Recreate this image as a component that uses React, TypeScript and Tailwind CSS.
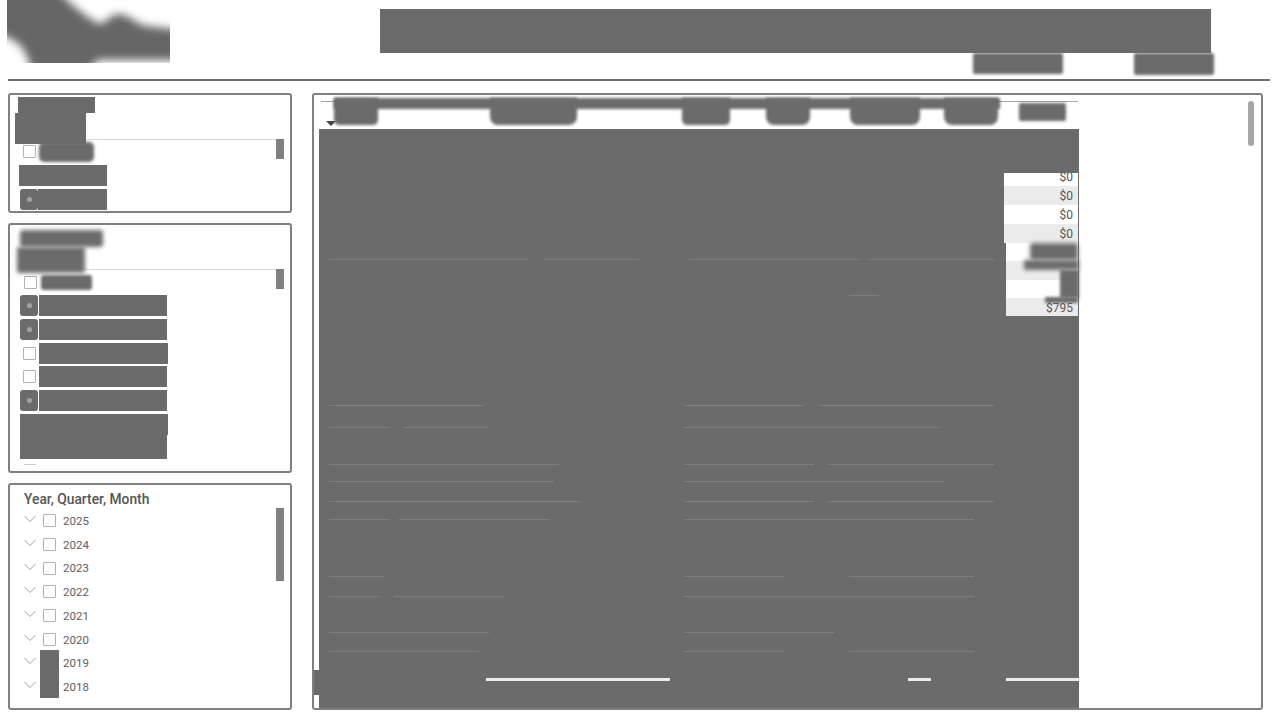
const font = { fontFamily: 'Roboto, "Noto Sans", sans-serif' };

const years = ['2025', '2024', '2023', '2022', '2021', '2020', '2019', '2018'];

// values column at the right of the table
const valueRows = [
  { text: '$0', cls: 'h-[13px] bg-white items-end overflow-hidden', inner: 'h-[19px] shrink-0' },
  { text: '$0', cls: 'h-[19px] bg-[#ebebeb] items-center', inner: '' },
  { text: '$0', cls: 'h-[19px] bg-white items-center', inner: '' },
  { text: '$0', cls: 'h-[19px] bg-[#ebebeb] items-center', inner: '' },
  { text: '', cls: 'h-[18px] bg-white items-center', inner: '' },
  { text: '', cls: 'h-[19px] bg-[#ebebeb] items-center', inner: '' },
  { text: '', cls: 'h-[18px] bg-white items-center', inner: '' },
  { text: '$795', cls: 'h-[18px] bg-[#ebebeb] items-center pt-[2px]', inner: '' },
];

// faint light streaks that run through the table body: [y, x, width]
const streaks = [
  [259, 10, 200], [259, 225, 95], [259, 370, 170], [259, 550, 125], [295, 530, 30],
  [405, 10, 155], [405, 365, 120], [405, 500, 175], [427, 10, 60], [427, 85, 85], [427, 365, 255],
  [464, 10, 230], [464, 365, 130], [464, 510, 165], [481, 10, 225], [481, 365, 260],
  [501, 10, 250], [501, 365, 130], [501, 510, 165], [519, 10, 60], [519, 80, 150], [519, 365, 290],
  [576, 10, 55], [576, 365, 100], [576, 530, 125], [596, 10, 50], [596, 75, 110], [596, 365, 290],
  [632, 10, 160], [632, 365, 150], [651, 10, 150], [651, 365, 100], [651, 530, 125],
];

function Box({ className }: { className: string }) {
  return <div className={`bg-[#6b6b6b] ${className}`} />;
}

function Check({ on }: { on?: boolean }) {
  if (on) {
    return (
      <div className="w-[18px] h-[21px] shrink-0 bg-[#6b6b6b] rounded-[3px] flex items-center justify-center blur-[0.6px]">
        <div className="w-[5px] h-[5px] rounded-full bg-[#a3a3a3]" />
      </div>
    );
  }
  return (
    <div className="w-[18px] h-[21px] shrink-0 flex items-center justify-center">
      <div className="w-[13px] h-[13px] border border-[#b3b3b3] rounded-[1px] bg-white" />
    </div>
  );
}

function SlicerRow({ on, width, className }: { on?: boolean; width: string; className: string }) {
  return (
    <div className={`flex ml-[10px] ${className}`}>
      <Check on={on} />
      <Box className={`h-[21px] ml-[1px] ${width}`} />
    </div>
  );
}

function Thumb({ className }: { className: string }) {
  return <div className={`absolute left-[266px] w-[8px] bg-[#808080] ${className}`} />;
}

function Panel({ className, children }: { className: string; children: React.ReactNode }) {
  return (
    <div className={`relative w-[284px] border-2 border-[#808080] rounded-[3px] overflow-hidden flex flex-col ${className}`}>
      {children}
    </div>
  );
}

function Logo() {
  return (
    <svg width="163" height="63" viewBox="0 0 163 63" className="ml-[7px] shrink-0">
      <defs>
        <filter id="soft" x="-10%" y="-30%" width="120%" height="160%">
          <feGaussianBlur stdDeviation="4" />
        </filter>
      </defs>
      <path
        d="M-10 -20 L44 -20 C56 0 76 14 92 24 C100 22 104 14 112 14 C122 14 128 24 140 26 L175 30 L175 60 L90 60 L80 75 L24 75 C22 52 14 40 -10 34 Z"
        fill="#666666"
        filter="url(#soft)"
      />
    </svg>
  );
}

export default function App() {
  return (
    <div className="w-[1280px] h-[720px] bg-white overflow-hidden" style={font}>
      {/* Header */}
      <div className="h-[79px] flex items-start">
        <Logo />
        <div className="ml-[210px] flex flex-col">
          <Box className="mt-[9px] w-[831px] h-[44px]" />
          <div className="flex ml-[593px]">
            <Box className="w-[90px] h-[21px] blur-[1.5px] rounded-[2px]" />
            <Box className="ml-[71px] w-[80px] h-[22px] blur-[1.5px] rounded-[2px]" />
          </div>
        </div>
      </div>
      <div className="ml-[8px] w-[1262px] h-[2px] bg-[#6f6f6f]" />

      <div className="mt-[12px] ml-[8px] flex gap-[20px]">
        {/* Slicers */}
        <div className="w-[284px] flex flex-col gap-[10px]">
          <Panel className="h-[120px]">
            <Box className="mt-[2px] ml-[8px] w-[77px] h-[16px]" />
            <div className="flex h-[27px]">
              <Box className="ml-[5px] w-[71px] h-[31px] shrink-0" />
              <div className="self-end flex-1 mr-[7px] border-b border-[#d9d9d9]" />
            </div>
            <div className="flex items-center h-[21px] mt-[1px] ml-[13px]">
              <div className="w-[13px] h-[13px] border border-[#b3b3b3] rounded-[1px] bg-white" />
              <Box className="ml-[3px] w-[55px] h-[20px] rounded-[5px] blur-[1.5px]" />
            </div>
            <div className="flex ml-[9px] mt-[3px]">
              <Box className="w-[88px] h-[21px]" />
            </div>
            <div className="flex ml-[10px] mt-[3px]">
              <Check on />
              <Box className="w-[69px] h-[21px]" />
            </div>
            <Thumb className="top-[44px] h-[20px]" />
          </Panel>

          <Panel className="h-[250px]">
            <Box className="mt-[5px] ml-[10px] w-[83px] h-[17px] rounded-[3px] blur-[2px]" />
            <div className="flex h-[23px]">
              <Box className="ml-[7px] w-[68px] h-[26px] shrink-0 rounded-[2px] blur-[2px]" />
              <div className="self-end flex-1 mr-[7px] border-b border-[#d9d9d9]" />
            </div>
            <div className="flex items-center h-[18px] mt-[3px] ml-[14px]">
              <div className="w-[13px] h-[13px] border border-[#b3b3b3] rounded-[1px] bg-white" />
              <Box className="ml-[4px] w-[51px] h-[15px] rounded-[3px] blur-[1.5px]" />
            </div>
            <SlicerRow on width="w-[128px]" className="mt-[4px]" />
            <SlicerRow on width="w-[128px]" className="mt-[3px]" />
            <SlicerRow width="w-[129px]" className="mt-[3px]" />
            <SlicerRow width="w-[128px]" className="mt-[2px]" />
            <SlicerRow on width="w-[128px]" className="mt-[3px]" />
            <Box className="mt-[3px] ml-[10px] w-[148px] h-[21px]" />
            <Box className="ml-[10px] w-[147px] h-[24px]" />
            <div className="mt-[5px] ml-[14px] w-[12px] h-[1px] bg-[#cccccc]" />
            <Thumb className="top-[44px] h-[20px]" />
          </Panel>

          <Panel className="h-[227px]">
            <div className="mt-[4px] ml-[14px] h-[20px] text-[13.8px] leading-[20px] font-medium text-[#555555]">
              Year, Quarter, Month
            </div>
            <div className="flex flex-col">
              {years.map((y, i) => (
                <div key={y} className="flex items-center h-[23.7px] ml-[14px]">
                  <svg width="12" height="8" viewBox="0 0 12 8" className="shrink-0 -mt-[3px]">
                    <path d="M0.5 1 L6 6.5 L11.5 1" fill="none" stroke="#a0a0a0" strokeWidth="1" />
                  </svg>
                  {i < 6 ? (
                    <div className="ml-[7px] w-[13px] h-[13px] border border-[#b3b3b3] rounded-[1px] bg-white" />
                  ) : (
                    <div className="ml-[7px] w-[13px] h-[13px]" />
                  )}
                  <span className="ml-[7px] mt-[2px] text-[11.5px] leading-none text-[#605e5c]">{y}</span>
                </div>
              ))}
            </div>
            <Thumb className="top-[23px] h-[73px]" />
            <div className="absolute left-[30px] top-[165px] w-[19px] h-[48px] bg-[#6b6b6b]" />
          </Panel>
        </div>

        {/* Table panel */}
        <div className="relative w-[951px] h-[617px] border-2 border-[#808080] rounded-[3px] overflow-hidden">
          <div className="ml-[5px] w-[760px] h-full flex flex-col">
            {/* Column headers */}
            <div className="relative h-[34px] shrink-0">
              <div className="absolute left-[2px] right-[1px] top-[6px] h-[1px] bg-[#a6a6a6]" />
              <div className="absolute left-[7px] top-[26px] w-0 h-0 border-x-[5px] border-x-transparent border-t-[5px] border-t-[#444444]" />
              <div className="absolute left-[15px] top-[3px] w-[666px] h-[11px] bg-[#6b6b6b] blur-[1.5px]" />
              <div className="flex pt-[3px] pl-[15px]">
                <Box className="w-[44px] h-[27px] rounded-b-[5px] blur-[1.5px]" />
                <Box className="ml-[112px] w-[87px] h-[27px] rounded-b-[8px] blur-[1.5px]" />
                <Box className="ml-[105px] w-[48px] h-[27px] rounded-b-[5px] blur-[1.5px]" />
                <Box className="ml-[36px] w-[44px] h-[27px] rounded-b-[8px] blur-[1.5px]" />
                <Box className="ml-[40px] w-[70px] h-[27px] rounded-b-[8px] blur-[1.5px]" />
                <Box className="ml-[24px] w-[54px] h-[27px] rounded-b-[8px] blur-[1.5px]" />
                <Box className="ml-[21px] w-[47px] h-[18px] mt-[5px] rounded-[2px] blur-[1.5px]" />
              </div>
            </div>

            {/* Table body */}
            <div className="relative flex-1 bg-[#6b6b6b] flex flex-col">
              <div className="h-[44px] shrink-0" />
              <div className="flex justify-end">
                <div className="w-[74px] mr-[1px] text-[12px] text-[#555555] text-right">
                  {valueRows.map((r, i) => (
                    <div key={i} className={`flex justify-end pr-[5px] ${i > 3 ? 'ml-[2px]' : ''} ${r.cls}`}>
                      <span className={`flex items-center ${r.inner}`}>{r.text}</span>
                    </div>
                  ))}
                </div>
              </div>
              <div className="absolute left-[711px] top-[114px] w-[48px] h-[17px] bg-[#6b6b6b] rounded-[3px] blur-[2px]" />
              <div className="absolute left-[705px] top-[131px] w-[55px] h-[10px] bg-[#6b6b6b] blur-[2px]" />
              <div className="absolute left-[741px] top-[141px] w-[19px] h-[28px] bg-[#6b6b6b] blur-[1.5px]" />
              <div className="absolute left-[726px] top-[168px] w-[33px] h-[6px] bg-[#6b6b6b] blur-[1.5px]" />
              {streaks.map(([y, x, w], i) => (
                <div
                  key={i}
                  className="absolute h-[1px] bg-[#808080]"
                  style={{ top: y - 129, left: x, width: w }}
                />
              ))}
              <div className="mt-[362px] flex h-[3px] shrink-0">
                <div className="w-[167px]" />
                <div className="w-[184px] bg-[#ebebeb]" />
                <div className="w-[238px]" />
                <div className="w-[23px] bg-[#ebebeb]" />
                <div className="w-[75px]" />
                <div className="w-[73px] bg-[#ebebeb]" />
              </div>
            </div>
          </div>
          <div className="absolute left-[-2px] top-[575px] w-[7px] h-[25px] bg-[#6b6b6b]" />
          <div className="absolute left-[934px] top-[6px] w-[6px] h-[45px] rounded-full bg-[#a6a6a6]" />
        </div>
      </div>
    </div>
  );
}
